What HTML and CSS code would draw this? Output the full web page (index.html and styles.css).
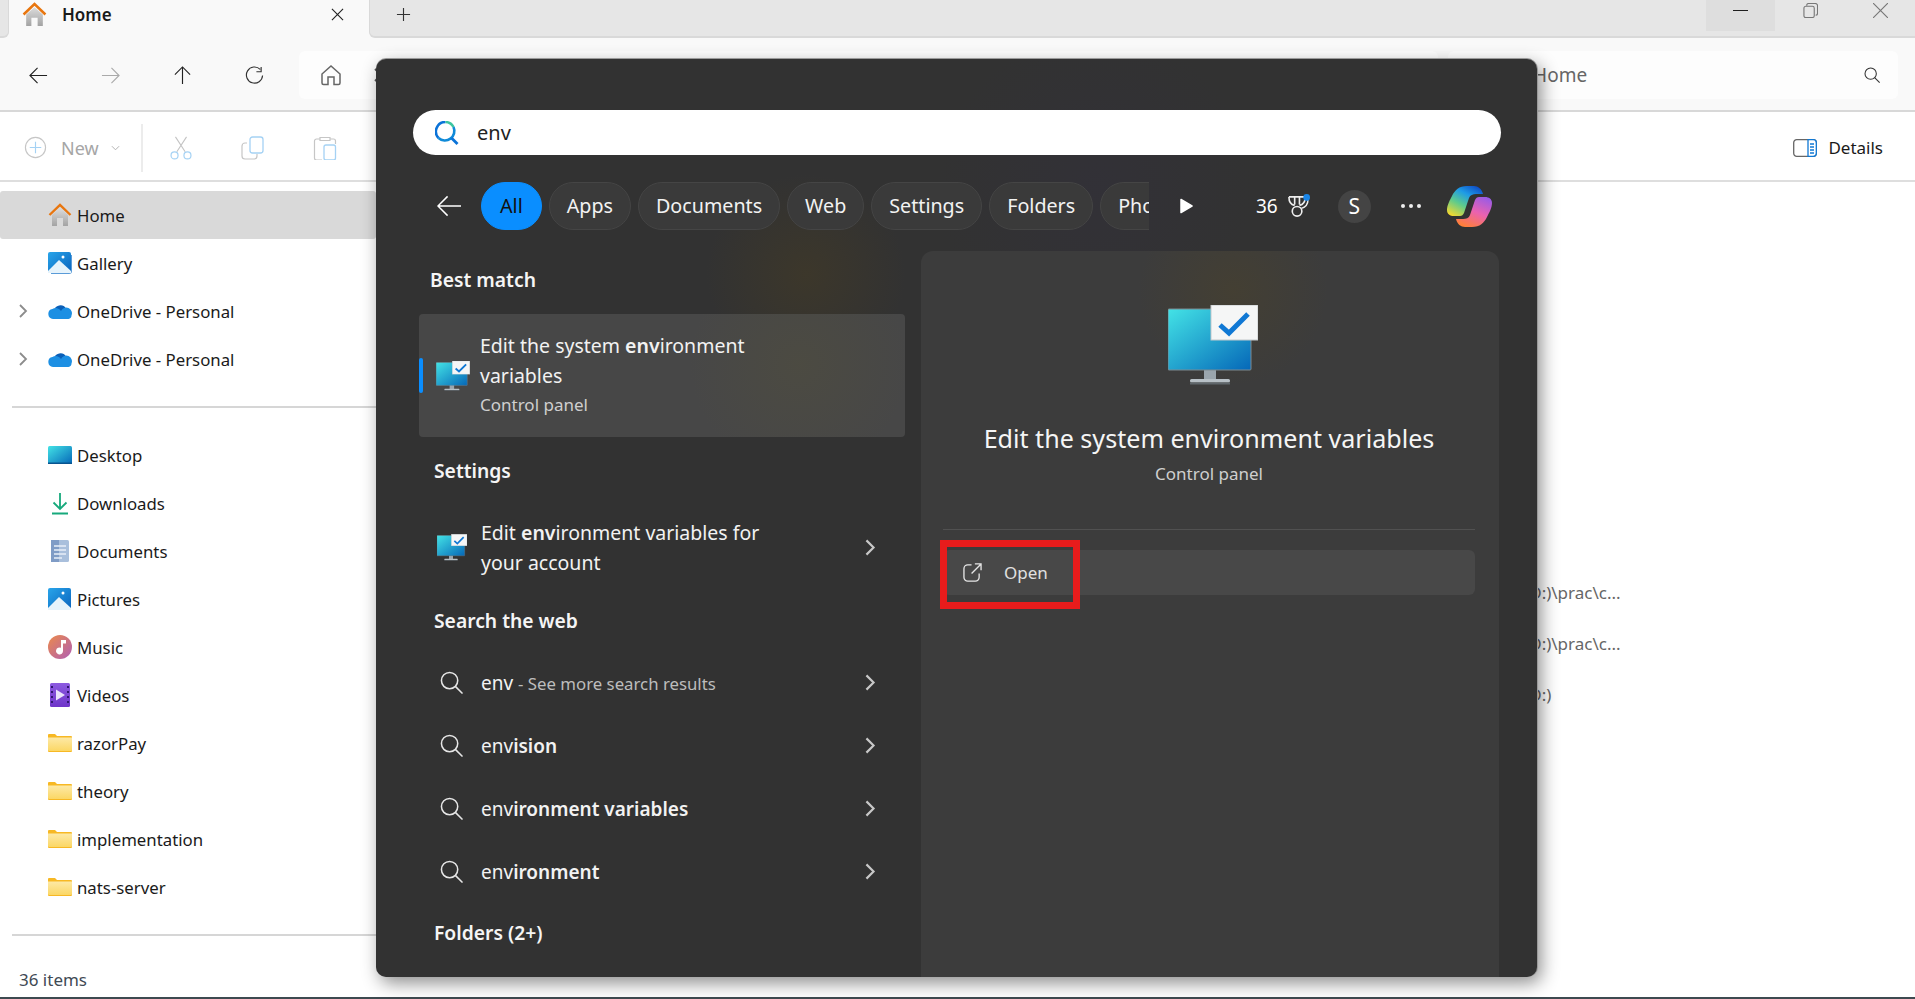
FILE: index.html
```html
<!DOCTYPE html>
<html lang="en">

<head>
    <meta charset="UTF-8">
    <meta name="viewport" content="width=device-width, initial-scale=1.0">
    <title>Home</title>
    <link rel="stylesheet" href="styles.css">
</head>

<body>

    <svg class="icon-defs" aria-hidden="true">
        <defs>
            <linearGradient id="gHome" x1="0" y1="0" x2="0" y2="1"><stop offset="0" stop-color="#dcdcdc"/><stop offset="1" stop-color="#a3a3a3"/></linearGradient>
            <linearGradient id="gScreen" x1="0" y1="0" x2="1" y2="1"><stop offset="0" stop-color="#43e3e6"/><stop offset="1" stop-color="#0567b8"/></linearGradient>
            <linearGradient id="gPic" x1="0" y1="0" x2="1" y2="1"><stop offset="0" stop-color="#29a5ea"/><stop offset="1" stop-color="#0a63bd"/></linearGradient>
            <linearGradient id="gMusic" x1="0" y1="0" x2="1" y2="1"><stop offset="0" stop-color="#ec8a4a"/><stop offset="1" stop-color="#b05fb5"/></linearGradient>
            <linearGradient id="gVideo" x1="0" y1="0" x2="0" y2="1"><stop offset="0" stop-color="#8c5be0"/><stop offset="1" stop-color="#6f35c9"/></linearGradient>
            <linearGradient id="gFolder" x1="0" y1="0" x2="0" y2="1"><stop offset="0" stop-color="#fde9a6"/><stop offset="1" stop-color="#fbd765"/></linearGradient>
            <linearGradient id="gCopA" x1="0.8" y1="0" x2="0.15" y2="1"><stop offset="0" stop-color="#0f4fc8"/><stop offset="0.3" stop-color="#1e9be6"/><stop offset="0.62" stop-color="#5ecb8c"/><stop offset="1" stop-color="#f5d92f"/></linearGradient>
            <linearGradient id="gCopB" x1="0.8" y1="0" x2="0.3" y2="1"><stop offset="0" stop-color="#9a5be6"/><stop offset="0.5" stop-color="#ea62b0"/><stop offset="1" stop-color="#ff7f3a"/></linearGradient>

            <symbol id="i-home" viewBox="0 0 24 24">
                <path d="M4 12 12 5l8 7v11h-5v-8H9v8H4z" fill="url(#gHome)"/>
                <path d="M1.500 12 12 2l10.500 10" fill="none" stroke="#e8760f" stroke-width="2.400"/>
            </symbol>
            <symbol id="i-gallery" viewBox="0 0 24 24">
                <path d="M3 23h18a3 3 0 0 0 3-3V4l-1 0v16a2 2 0 0 1-2 2H3z" fill="#5a9bd8"/>
                <rect y="1" width="23" height="21" rx="2" fill="url(#gPic)"/>
                <path d="M0 20 11 9l12 11v2H0z" fill="#e6f3fb"/>
                <circle cx="15" cy="6" r="1.500" fill="#fff"/>
            </symbol>
            <symbol id="i-cloud" viewBox="0 0 24 16">
                <path d="M6 8a6.500 6.500 0 0 1 12-2.500A5 5 0 0 1 23 10H8z" fill="#0a5fb8"/>
                <path d="M5 16a5 5 0 0 1-.6-9.900A6 6 0 0 1 13 8a4.500 4.500 0 0 1 10.500 4.500A3.500 3.500 0 0 1 20.500 16z" fill="#1c8fe3"/>
            </symbol>
            <symbol id="i-desktop" viewBox="0 0 24 18">
                <rect width="24" height="18" rx="1.500" fill="url(#gScreen)"/>
                <rect y="16.500" width="24" height="1.500" fill="#08548f"/>
            </symbol>
            <symbol id="i-download" viewBox="0 0 24 24">
                <path d="M12 2v16M5.500 11.500 12 18l6.500-6.500M4 22.500h16" fill="none" stroke="#17a97c" stroke-width="1.800"/>
            </symbol>
            <symbol id="i-docs" viewBox="0 0 24 24">
                <rect x="3" y="1" width="18" height="22" rx="1.500" fill="#a9bfdc"/>
                <path d="M3 1h8v22H3z" fill="#7f9cc6"/>
                <path d="M6 7h12M6 11h12M6 15h12M6 19h8" stroke="#e8eef7" stroke-width="1.500"/>
            </symbol>
            <symbol id="i-pictures" viewBox="0 0 24 24">
                <rect y="1" width="23" height="22" rx="2" fill="url(#gPic)"/>
                <path d="M0 21 11 10l12 11v2H0z" fill="#e6f3fb"/>
                <circle cx="15" cy="6" r="1.500" fill="#fff"/>
            </symbol>
            <symbol id="i-music" viewBox="0 0 24 24">
                <circle cx="12" cy="12" r="12" fill="url(#gMusic)"/>
                <path d="M13 5h5v3.500h-3V16a3.500 3.500 0 1 1-2-3.200z" fill="#fff"/>
            </symbol>
            <symbol id="i-video" viewBox="0 0 24 24">
                <rect x="2" y="0" width="20" height="24" rx="1.500" fill="url(#gVideo)"/>
                <path d="M4 3v2M4 8v2M4 13v2M4 18v2M20 3v2M20 8v2M20 13v2M20 18v2" stroke="#30176e" stroke-width="2"/>
                <path d="M8 6.500 17 12l-9 5.500z" fill="#e9e2fb"/>
            </symbol>
            <symbol id="i-folder" viewBox="0 0 24 18">
                <path d="M1 0h6l2 2h14a1 1 0 0 1 1 1v14a1 1 0 0 1-1 1H1a1 1 0 0 1-1-1V1a1 1 0 0 1 1-1z" fill="#f7b824"/>
                <path d="M0 3.500h24V16a1 1 0 0 1-1 1H1a1 1 0 0 1-1-1z" fill="url(#gFolder)"/>
            </symbol>
            <symbol id="i-monitor" viewBox="0 0 90 80">
                <rect x="36" y="64" width="12" height="11" fill="#9aa5ad"/>
                <rect x="22" y="74" width="40" height="3.500" rx="1.500" fill="#b7c0c6"/>
                <rect x="22" y="77.500" width="40" height="2" fill="#5f666b"/>
                <rect x="0" y="4" width="83" height="61" rx="1" fill="url(#gScreen)" stroke="#7c8a90"/>
                <rect x="43" y="0" width="47" height="35" fill="#f5f6f6" stroke="#c3c8cb"/>
                <path d="M52 20l9 8 19-19" fill="none" stroke="#1078d4" stroke-width="5"/>
            </symbol>
            <symbol id="i-search" viewBox="0 0 24 24">
                <circle cx="10" cy="10" r="8.500" fill="none" stroke="currentColor" stroke-width="1.600"/>
                <path d="M16 16 23.500 23.500" stroke="currentColor" stroke-width="1.600"/>
            </symbol>
            <symbol id="i-chev" viewBox="0 0 10 16">
                <path d="M2 2l6 6-6 6" fill="none" stroke="currentColor" stroke-width="1.800"/>
            </symbol>
        </defs>
    </svg>

    <div class="explorer">
        <div class="tabbar">
            <div class="tab-stub"></div>
            <div class="tab">
                <svg class="tab-icon"><use href="#i-home"/></svg>
                <span class="tab-title">Home</span>
                <svg class="tab-close" viewBox="0 0 14 14"><path d="M1 1l12 12M13 1 1 13" stroke="#222" stroke-width="1.200"/></svg>
            </div>
            <div class="tab-rest">
                <div class="tab-add">
                    <svg viewBox="0 0 16 16"><path d="M8 1v14M1 8h14" stroke="#333" stroke-width="1.200"/></svg>
                </div>
                <div class="win-controls">
                    <div class="win-btn win-min"><svg viewBox="0 0 16 16"><path d="M0 8h16" stroke="#111" stroke-width="1"/></svg></div>
                    <div class="win-btn"><svg viewBox="0 0 16 16"><rect x="1" y="3.500" width="11" height="12" rx="2" fill="none" stroke="#777" stroke-width="1.200"/><path d="M4 3V2.500A2 2 0 0 1 6 .5h7a2.500 2.500 0 0 1 2.500 2.500v8a2 2 0 0 1-2 2" fill="none" stroke="#777" stroke-width="1.200"/></svg></div>
                    <div class="win-btn"><svg viewBox="0 0 16 16"><path d="M0 0l16 16M16 0 0 16" stroke="#777" stroke-width="1.200"/></svg></div>
                </div>
            </div>
        </div>

        <div class="navbar">
            <div class="nav-btn"><svg viewBox="0 0 20 20"><path d="M19 10H1M9 2l-8 8 8 8" fill="none" stroke="#222" stroke-width="1.200"/></svg></div>
            <div class="nav-btn"><svg viewBox="0 0 20 20"><path d="M1 10h18M11 2l8 8-8 8" fill="none" stroke="#aaa" stroke-width="1.200"/></svg></div>
            <div class="nav-btn"><svg viewBox="0 0 20 20"><path d="M10 19V1M2 9l8-8 8 8" fill="none" stroke="#222" stroke-width="1.200"/></svg></div>
            <div class="nav-btn"><svg viewBox="0 0 20 20"><path d="M16 3.500A8.500 8.500 0 1 0 18.500 10M17 1v5h-5" fill="none" stroke="#333" stroke-width="1.200"/></svg></div>
            <div class="address">
                <svg class="address-home" viewBox="0 0 22 22"><path d="M2 10 11 2l9 8v9a1.500 1.500 0 0 1-1.500 1.500H14V13H8v7.500H3.500A1.500 1.500 0 0 1 2 19z" fill="none" stroke="#666" stroke-width="1.500"/></svg>
                <svg class="address-chev"><use href="#i-chev"/></svg>
                <span>Home</span>
            </div>
            <div class="search-box">
                <span>Search Home</span>
                <svg class="search-box-icon"><use href="#i-search"/></svg>
            </div>
        </div>

        <div class="toolbar">
            <div class="new-btn">
                <svg class="new-plus" viewBox="0 0 24 24"><circle cx="12" cy="12" r="10.500" fill="none" stroke="#c6c6c6" stroke-width="1.200"/><path d="M12 6v12M6 12h12" stroke="#a5d2f4" stroke-width="1.200"/></svg>
                <span>New</span>
                <svg class="new-chev" viewBox="0 0 10 6"><path d="M1 1l4 4 4-4" fill="none" stroke="#aaa" stroke-width="1"/></svg>
            </div>
            <div class="tool-sep"></div>
            <div class="tool-btn"><svg viewBox="0 0 24 26"><path d="M6 1l10.500 16M18 1 7.500 17" stroke="#c4c4c4" stroke-width="1.200"/><circle cx="5" cy="21" r="3.800" fill="none" stroke="#a5d2f4" stroke-width="1.300"/><circle cx="19" cy="21" r="3.800" fill="none" stroke="#a5d2f4" stroke-width="1.300"/></svg></div>
            <div class="tool-btn"><svg viewBox="0 0 24 24"><path d="M6 7H4a3 3 0 0 0-3 3v10a3 3 0 0 0 3 3h9a3 3 0 0 0 3-3v-2" fill="none" stroke="#c6c6c6" stroke-width="1.200"/><rect x="9" y="1" width="13" height="16" rx="2.500" fill="none" stroke="#a5d2f4" stroke-width="1.300"/></svg></div>
            <div class="tool-btn"><svg viewBox="0 0 24 24"><path d="M7 3H3.500A2 2 0 0 0 1.500 5v17a2 2 0 0 0 2 2H9M17 3h3.500a2 2 0 0 1 2 2v3M7 1.500h10v3H7z" fill="none" stroke="#c6c6c6" stroke-width="1.200"/><rect x="11" y="9" width="11.500" height="15" rx="2" fill="none" stroke="#a5d2f4" stroke-width="1.300"/></svg></div>
            <div class="tool-spacer"></div>
            <div class="details-btn">
                <svg viewBox="0 0 24 18"><rect x=".7" y=".7" width="22.600" height="16.600" rx="3" fill="none" stroke="#666" stroke-width="1.300"/><path d="M15 .7h5.300a3 3 0 0 1 3 3v10.600a3 3 0 0 1-3 3H15z" fill="#fff" stroke="#1078d4" stroke-width="1.300"/><path d="M17 5h4M17 8h4M17 11h4M17 14h4" stroke="#1078d4" stroke-width="1.300"/></svg>
                <span>Details</span>
            </div>
        </div>

        <div class="body">
            <div class="sidebar">
                <div class="side-row side-row-active"><svg class="side-icon"><use href="#i-home"/></svg>Home</div>
                <div class="side-row"><svg class="side-icon"><use href="#i-gallery"/></svg>Gallery</div>
                <div class="side-row"><svg class="side-chev"><use href="#i-chev"/></svg><svg class="side-icon side-icon-cloud"><use href="#i-cloud"/></svg>OneDrive - Personal</div>
                <div class="side-row"><svg class="side-chev"><use href="#i-chev"/></svg><svg class="side-icon side-icon-cloud"><use href="#i-cloud"/></svg>OneDrive - Personal</div>
                <div class="side-divider"></div>
                <div class="side-row"><svg class="side-icon side-icon-flat"><use href="#i-desktop"/></svg>Desktop</div>
                <div class="side-row"><svg class="side-icon"><use href="#i-download"/></svg>Downloads</div>
                <div class="side-row"><svg class="side-icon"><use href="#i-docs"/></svg>Documents</div>
                <div class="side-row"><svg class="side-icon"><use href="#i-pictures"/></svg>Pictures</div>
                <div class="side-row"><svg class="side-icon"><use href="#i-music"/></svg>Music</div>
                <div class="side-row"><svg class="side-icon"><use href="#i-video"/></svg>Videos</div>
                <div class="side-row"><svg class="side-icon side-icon-flat"><use href="#i-folder"/></svg>razorPay</div>
                <div class="side-row"><svg class="side-icon side-icon-flat"><use href="#i-folder"/></svg>theory</div>
                <div class="side-row"><svg class="side-icon side-icon-flat"><use href="#i-folder"/></svg>implementation</div>
                <div class="side-row"><svg class="side-icon side-icon-flat"><use href="#i-folder"/></svg>nats-server</div>
                <div class="side-divider"></div>
                <div class="status">36 items</div>
            </div>
            <div class="filelist">
                <div class="file-path">Local Disk (D:)\prac\c...</div>
                <div class="file-path">Local Disk (D:)\prac\c...</div>
                <div class="file-path">Local Disk (D:)</div>
            </div>
        </div>
    </div>

    <!-- start menu search, floats over the explorer window -->
    <div class="panel">
        <div class="panel-search">
            <svg class="panel-search-icon" viewBox="0 0 24 24"><path d="M3.500 17A9.500 9.500 0 0 1 10.500 1" fill="none" stroke="#0b73d8" stroke-width="2.600"/><path d="M10.500 1a9.500 9.500 0 0 1 8 5" fill="none" stroke="#3cc5a0" stroke-width="2.600"/><path d="M18.500 6a9.500 9.500 0 0 1-15 11" fill="none" stroke="#0f8ad8" stroke-width="2.600"/><path d="M16.500 17l6 6" stroke="#0b73d8" stroke-width="2.800"/></svg>
            <span>env</span>
        </div>

        <div class="chips-row">
            <svg class="chips-back" viewBox="0 0 26 22"><path d="M25 11H1M11 1 1 11l10 10" fill="none" stroke="#fff" stroke-width="1.500"/></svg>
            <div class="chips">
                <div class="chip chip-on">All</div>
                <div class="chip">Apps</div>
                <div class="chip">Documents</div>
                <div class="chip">Web</div>
                <div class="chip">Settings</div>
                <div class="chip">Folders</div>
                <div class="chip">Photos</div>
            </div>
            <svg class="chips-play" viewBox="0 0 14 16"><path d="M2 1.500 13 8 2 14.500z" fill="#fff" stroke="#fff" stroke-linejoin="round" stroke-width="1.500"/></svg>
            <span class="points">36</span>
            <svg class="medal" viewBox="0 0 24 26"><path d="M2 3h17M2 3c0 5 2 8 6 9M19 3c0 5-2 8-6 9M8 3v8M13 3v8" fill="none" stroke="#eee" stroke-width="1.700"/><circle cx="10.500" cy="18" r="5" fill="none" stroke="#eee" stroke-width="1.700"/><path d="M22 5c0 6-3 9-7 10" fill="none" stroke="#eee" stroke-width="1.500"/><circle cx="20.500" cy="3.500" r="3.500" fill="#1a86e8"/></svg>
            <div class="avatar">S</div>
            <svg class="dots" viewBox="0 0 20 4"><circle cx="2" cy="2" r="2" fill="#eee"/><circle cx="10" cy="2" r="2" fill="#eee"/><circle cx="18" cy="2" r="2" fill="#eee"/></svg>
            <svg class="copilot" viewBox="0 0 45 41">
                <path d="M27 0H20C12 0 8 4 5 10 3 14 0 19 0 24c0 4 3 6 7 6h6c2 0 3-1 4-3l5-15c1-3 4-4 7-4h7c-1-5-5-8-9-8z" fill="url(#gCopA)"/>
                <path d="M18 41h7c8 0 12-4 15-10 2-4 5-9 5-14 0-4-3-6-7-6h-6c-2 0-3 1-4 3l-5 15c-1 3-4 4-7 4h-7c1 5 5 8 9 8z" fill="url(#gCopB)"/>
            </svg>
        </div>

        <div class="columns">
            <div class="results">
                <div class="group-head group-head-first">Best match</div>
                <div class="best">
                    <svg class="best-icon"><use href="#i-monitor"/></svg>
                    <div class="best-text">
                        <div>Edit the system <b>env</b>ironment variables</div>
                        <div class="best-sub">Control panel</div>
                    </div>
                </div>

                <div class="group-head">Settings</div>
                <div class="result result-tall">
                    <svg class="best-icon best-icon-small"><use href="#i-monitor"/></svg>
                    <div class="result-text result-wrap">Edit <b>env</b>ironment variables for your account</div>
                    <svg class="result-chev"><use href="#i-chev"/></svg>
                </div>

                <div class="group-head">Search the web</div>
                <div class="web-list">
                    <div class="result">
                        <svg class="result-search"><use href="#i-search"/></svg>
                        <div class="result-text">env <span class="result-note">- See more search results</span></div>
                        <svg class="result-chev"><use href="#i-chev"/></svg>
                    </div>
                    <div class="result">
                        <svg class="result-search"><use href="#i-search"/></svg>
                        <div class="result-text">env<b>ision</b></div>
                        <svg class="result-chev"><use href="#i-chev"/></svg>
                    </div>
                    <div class="result">
                        <svg class="result-search"><use href="#i-search"/></svg>
                        <div class="result-text">env<b>ironment variables</b></div>
                        <svg class="result-chev"><use href="#i-chev"/></svg>
                    </div>
                    <div class="result">
                        <svg class="result-search"><use href="#i-search"/></svg>
                        <div class="result-text">env<b>ironment</b></div>
                        <svg class="result-chev"><use href="#i-chev"/></svg>
                    </div>
                </div>

                <div class="group-head">Folders (2+)</div>
            </div>

            <div class="preview">
                <svg class="preview-icon"><use href="#i-monitor"/></svg>
                <div class="preview-title">Edit the system environment variables</div>
                <div class="preview-sub">Control panel</div>
                <div class="preview-line"></div>
                <div class="open-btn">
                    <svg viewBox="0 0 20 20"><path d="M9 2H5a4 4 0 0 0-4 4v9a4 4 0 0 0 4 4h8a4 4 0 0 0 4-4v-4" fill="none" stroke="#e6e6e6" stroke-width="1.400"/><path d="M9 11 19 1M12.500 1H19v6.500" fill="none" stroke="#e6e6e6" stroke-width="1.400"/></svg>
                    <span>Open</span>
                    <div class="open-mark"></div>
                </div>
            </div>
        </div>
    </div>

</body>

</html>
```

FILE: styles.css
```css
* {
    box-sizing: border-box;
}

html, body {
    height: 100%;
}

body {
    margin: 0;
    overflow: hidden;
    background: #fff;
    color: #1a1a1a;
    font-family: "Noto Sans", "Open Sans", sans-serif;
}

b {
    font-weight: 600;
}

.icon-defs {
    position: absolute;
    width: 0;
    height: 0;
}

.explorer {
    display: flex;
    flex-direction: column;
    height: 999px;
    border-bottom: 2px solid #3e4a50;
}

/* title strip */
.tabbar {
    display: flex;
    height: 38px;
    flex-shrink: 0;
    background: #f9f9f9;
}

.tab-stub {
    width: 9px;
    background: #e6e6e6;
    border-bottom: 2px solid #d9d9d9;
    border-right: 1px solid #d9d9d9;
    border-radius: 0 0 6px 0;
}

.tab {
    display: flex;
    align-items: center;
    width: 360px;
    padding: 0 25px 10px 13px;
}

.tab-icon {
    width: 25px;
    height: 25px;
}

.tab-title {
    margin-left: 15px;
    font-size: 17px;
    font-weight: 600;
}

.tab-close {
    width: 13px;
    height: 13px;
    margin-left: auto;
}

.tab-rest {
    display: flex;
    flex: 1;
    background: #e6e6e6;
    border-bottom: 2px solid #d9d9d9;
    border-left: 1px solid #d9d9d9;
    border-radius: 0 0 0 6px;
}

.tab-add {
    display: flex;
    align-items: center;
    justify-content: center;
    width: 67px;
    height: 28px;
}

.tab-add svg {
    width: 15px;
    height: 15px;
}

.win-controls {
    display: flex;
    margin-left: auto;
    height: 31px;
}

.win-btn {
    display: flex;
    align-items: center;
    justify-content: center;
    width: 70px;
    height: 31px;
    padding-bottom: 10px;
}

.win-btn svg {
    width: 15px;
    height: 15px;
}

.win-min {
    width: 69px;
    background: #dedede;
}

/* back / forward / address */
.navbar {
    display: flex;
    align-items: center;
    height: 74px;
    flex-shrink: 0;
    padding: 2px 17px 0 2px;
    background: #f9f9f9;
    border-bottom: 2px solid #d8d8d8;
}

.nav-btn {
    display: flex;
    align-items: center;
    justify-content: center;
    width: 72px;
}

.nav-btn svg {
    width: 19px;
    height: 19px;
}

.address {
    display: flex;
    align-items: center;
    flex: 1;
    height: 48px;
    margin-left: 9px;
    padding-left: 21px;
    gap: 31px;
    background: #fdfdfd;
    border-radius: 6px;
    font-size: 17px;
}

.address-home {
    width: 22px;
    height: 22px;
}

.address-chev {
    width: 10px;
    height: 16px;
    color: #555;
}

.search-box {
    display: flex;
    align-items: center;
    width: 450px;
    height: 48px;
    margin-left: 10px;
    padding: 0 18px 0 20px;
    background: #fdfdfd;
    border-radius: 6px;
    color: #666;
    font-size: 19px;
}

.search-box-icon {
    width: 16px;
    height: 16px;
    margin-left: auto;
    color: #333;
}

/* command row */
.toolbar {
    display: flex;
    align-items: center;
    height: 70px;
    flex-shrink: 0;
    padding: 3px 0 0 24px;
    border-bottom: 2px solid #dedede;
}

.new-btn {
    display: flex;
    align-items: center;
    width: 117px;
    color: #a6a6a6;
    font-size: 18px;
}

.new-plus {
    width: 23px;
    height: 23px;
    margin-right: 14px;
}

.new-chev {
    width: 9px;
    height: 6px;
    margin-left: 12px;
}

.tool-sep {
    width: 2px;
    height: 48px;
    margin-right: 2px;
    background: #ececec;
}

.tool-btn {
    display: flex;
    justify-content: center;
    width: 72px;
}

.tool-btn svg {
    width: 24px;
    height: 24px;
}

.tool-spacer {
    flex: 1;
}

.details-btn {
    display: flex;
    align-items: center;
    gap: 11px;
    margin-right: 32px;
    font-size: 17px;
}

.details-btn svg {
    width: 24px;
    height: 18px;
}

/* sidebar + file list */
.body {
    display: flex;
    flex: 1;
    min-height: 0;
}

.sidebar {
    width: 376px;
    flex-shrink: 0;
    padding-top: 9px;
    font-size: 16.800px;
}

.side-row {
    display: flex;
    align-items: center;
    height: 48px;
    padding-left: 48px;
    position: relative;
}

.side-row-active {
    background: #d9d9d9;
    border-radius: 3px;
}

.side-icon {
    width: 24px;
    height: 24px;
    margin-right: 5px;
    flex-shrink: 0;
}

.side-icon-cloud {
    height: 16px;
}

.side-icon-flat {
    height: 18px;
}

.side-chev {
    position: absolute;
    left: 18px;
    top: 16px;
    width: 10px;
    height: 16px;
    color: #8c8c8c;
}

.side-divider {
    height: 2px;
    margin: 23px 0 23px 12px;
    background: #d6d6d6;
}

.status {
    margin-left: 19px;
    margin-top: 32px;
    color: #3f4a54;
    font-size: 17px;
}

.filelist {
    flex: 1;
    padding: 399px 0 0 1064px;
    color: #666;
    font-size: 17px;
}

.file-path {
    height: 51px;
    line-height: 24px;
    white-space: nowrap;
}

/* start search panel */
.panel {
    position: absolute;
    left: 376px;
    top: 59px;
    width: 1161px;
    height: 918px;
    padding: 51px 0 0;
    background:
        radial-gradient(circle at 430px 215px, rgba(90, 70, 20, 0.25), transparent 100px),
        radial-gradient(circle at 720px 130px, rgba(50, 45, 70, 0.25), transparent 160px),
        #323232;
    border-radius: 10px;
    box-shadow: 0 -1px 0 #9a9a9a, 1px 0 0 #9a9a9a, 4px 6px 18px rgba(0, 0, 0, 0.45);
    color: #fff;
    overflow: hidden;
}

.panel-search {
    display: flex;
    align-items: center;
    height: 45px;
    margin: 0 36px 0 37px;
    padding-left: 22px;
    background: #fff;
    border-radius: 23px;
    color: #222;
    font-size: 20px;
}

.panel-search-icon {
    width: 24px;
    height: 24px;
    margin-right: 18px;
}

.chips-row {
    display: flex;
    align-items: center;
    height: 48px;
    margin-top: 27px;
    padding-left: 61px;
}

.chips-back {
    width: 25px;
    height: 22px;
    margin-right: 19px;
}

.chips {
    display: flex;
    gap: 7px;
    width: 668px;
    overflow: hidden;
}

.chip {
    display: flex;
    align-items: center;
    padding: 0 17px 1px;
    height: 48px;
    flex-shrink: 0;
    background: #3a3a3a;
    border: 1.500px solid #454545;
    border-radius: 24px;
    color: #f2f2f2;
    font-size: 19.700px;
}

.chip-on {
    padding: 0 18px 1px;
    background: #0a8eff;
    border-color: #0a8eff;
    color: #111;
}

.chips-play {
    width: 14px;
    height: 16px;
    margin-left: 30px;
}

.points {
    margin-left: 63px;
    font-size: 19px;
}

.medal {
    width: 23px;
    height: 25px;
    margin-left: 9px;
}

.avatar {
    display: flex;
    align-items: center;
    justify-content: center;
    width: 33px;
    height: 33px;
    margin-left: 28px;
    background: #444;
    border-radius: 50%;
    font-size: 21px;
}

.dots {
    width: 20px;
    height: 4px;
    margin-left: 30px;
}

.copilot {
    width: 45px;
    height: 41px;
    margin-left: 26px;
}

.columns {
    display: flex;
    gap: 16px;
    margin-top: 21px;
    padding-left: 43px;
}

.results {
    width: 486px;
    flex-shrink: 0;
}

.group-head {
    height: 28px;
    margin: 13px 0 16px 15px;
    font-size: 19.300px;
    font-weight: 600;
    line-height: 28px;
    color: #f5f5f5;
}

.group-head-first {
    margin: 15px 0 20px 11px;
}

.best {
    position: relative;
    display: flex;
    align-items: center;
    height: 123px;
    margin-bottom: 20px;
    padding-left: 17px;
    background:
        radial-gradient(circle at 380px 50px, rgba(90, 85, 50, 0.25), transparent 110px),
        #474747;
    border-radius: 4px;
}

.best::before {
    content: "";
    position: absolute;
    left: 0;
    top: 44px;
    width: 4px;
    height: 35px;
    background: #0a8eff;
    border-radius: 2px;
}

.best-icon {
    width: 34px;
    height: 30px;
    flex-shrink: 0;
}

.best-icon-small {
    width: 30px;
    height: 27px;
}

.best-text {
    width: 310px;
    margin-left: 10px;
    padding-bottom: 2px;
    font-size: 19.500px;
    line-height: 30px;
    color: #f2f2f2;
}

.best-sub {
    color: #cfcfcf;
    font-size: 17px;
    line-height: 28px;
}

.result {
    display: flex;
    align-items: center;
    height: 63px;
    padding-left: 21px;
    font-size: 19px;
    color: #f2f2f2;
}

.result-tall {
    height: 93px;
    padding-left: 18px;
}

.result-text {
    margin-left: 18px;
}

.result-wrap {
    width: 300px;
    margin-left: 14px;
    font-size: 19.500px;
    line-height: 30px;
}

.result-note {
    color: #bdbdbd;
    font-size: 16.800px;
}

.result-search {
    width: 23px;
    height: 23px;
    flex-shrink: 0;
    color: #e6e6e6;
}

.result-chev {
    width: 12px;
    height: 19px;
    margin-left: auto;
    margin-right: 29px;
    color: #c8c8c8;
}

.web-list {
    margin-bottom: 16px;
}

.preview {
    display: flex;
    flex-direction: column;
    align-items: center;
    width: 578px;
    height: 726px;
    padding: 54px 24px 0 22px;
    background:
        radial-gradient(circle at 312px 40px, rgba(85, 70, 30, 0.3), transparent 95px),
        #3c3c3c;
    border-radius: 12px 12px 0 0;
}

.preview-icon {
    flex-shrink: 0;
    width: 90px;
    height: 80px;
    margin-left: 8px;
}

.preview-title {
    margin-top: 36px;
    font-size: 25.100px;
    line-height: 34px;
    color: #f5f5f5;
}

.preview-sub {
    margin-top: 7px;
    font-size: 17px;
    line-height: 24px;
    color: #cfcfcf;
}

.preview-line {
    align-self: stretch;
    height: 1px;
    margin-top: 43px;
    background: #515151;
}

.open-btn {
    position: relative;
    display: flex;
    align-items: center;
    align-self: stretch;
    height: 45px;
    margin-top: 20px;
    padding-left: 20px;
    background: #484848;
    border-radius: 6px;
    color: #e0e0e0;
    font-size: 17px;
}

.open-btn svg {
    width: 19px;
    height: 19px;
    margin-right: 22px;
}

/* red annotation box drawn over the screenshot */
.open-mark {
    position: absolute;
    left: -3px;
    top: -10px;
    width: 140px;
    height: 69px;
    border: 7px solid #e81c1c;
}
```
